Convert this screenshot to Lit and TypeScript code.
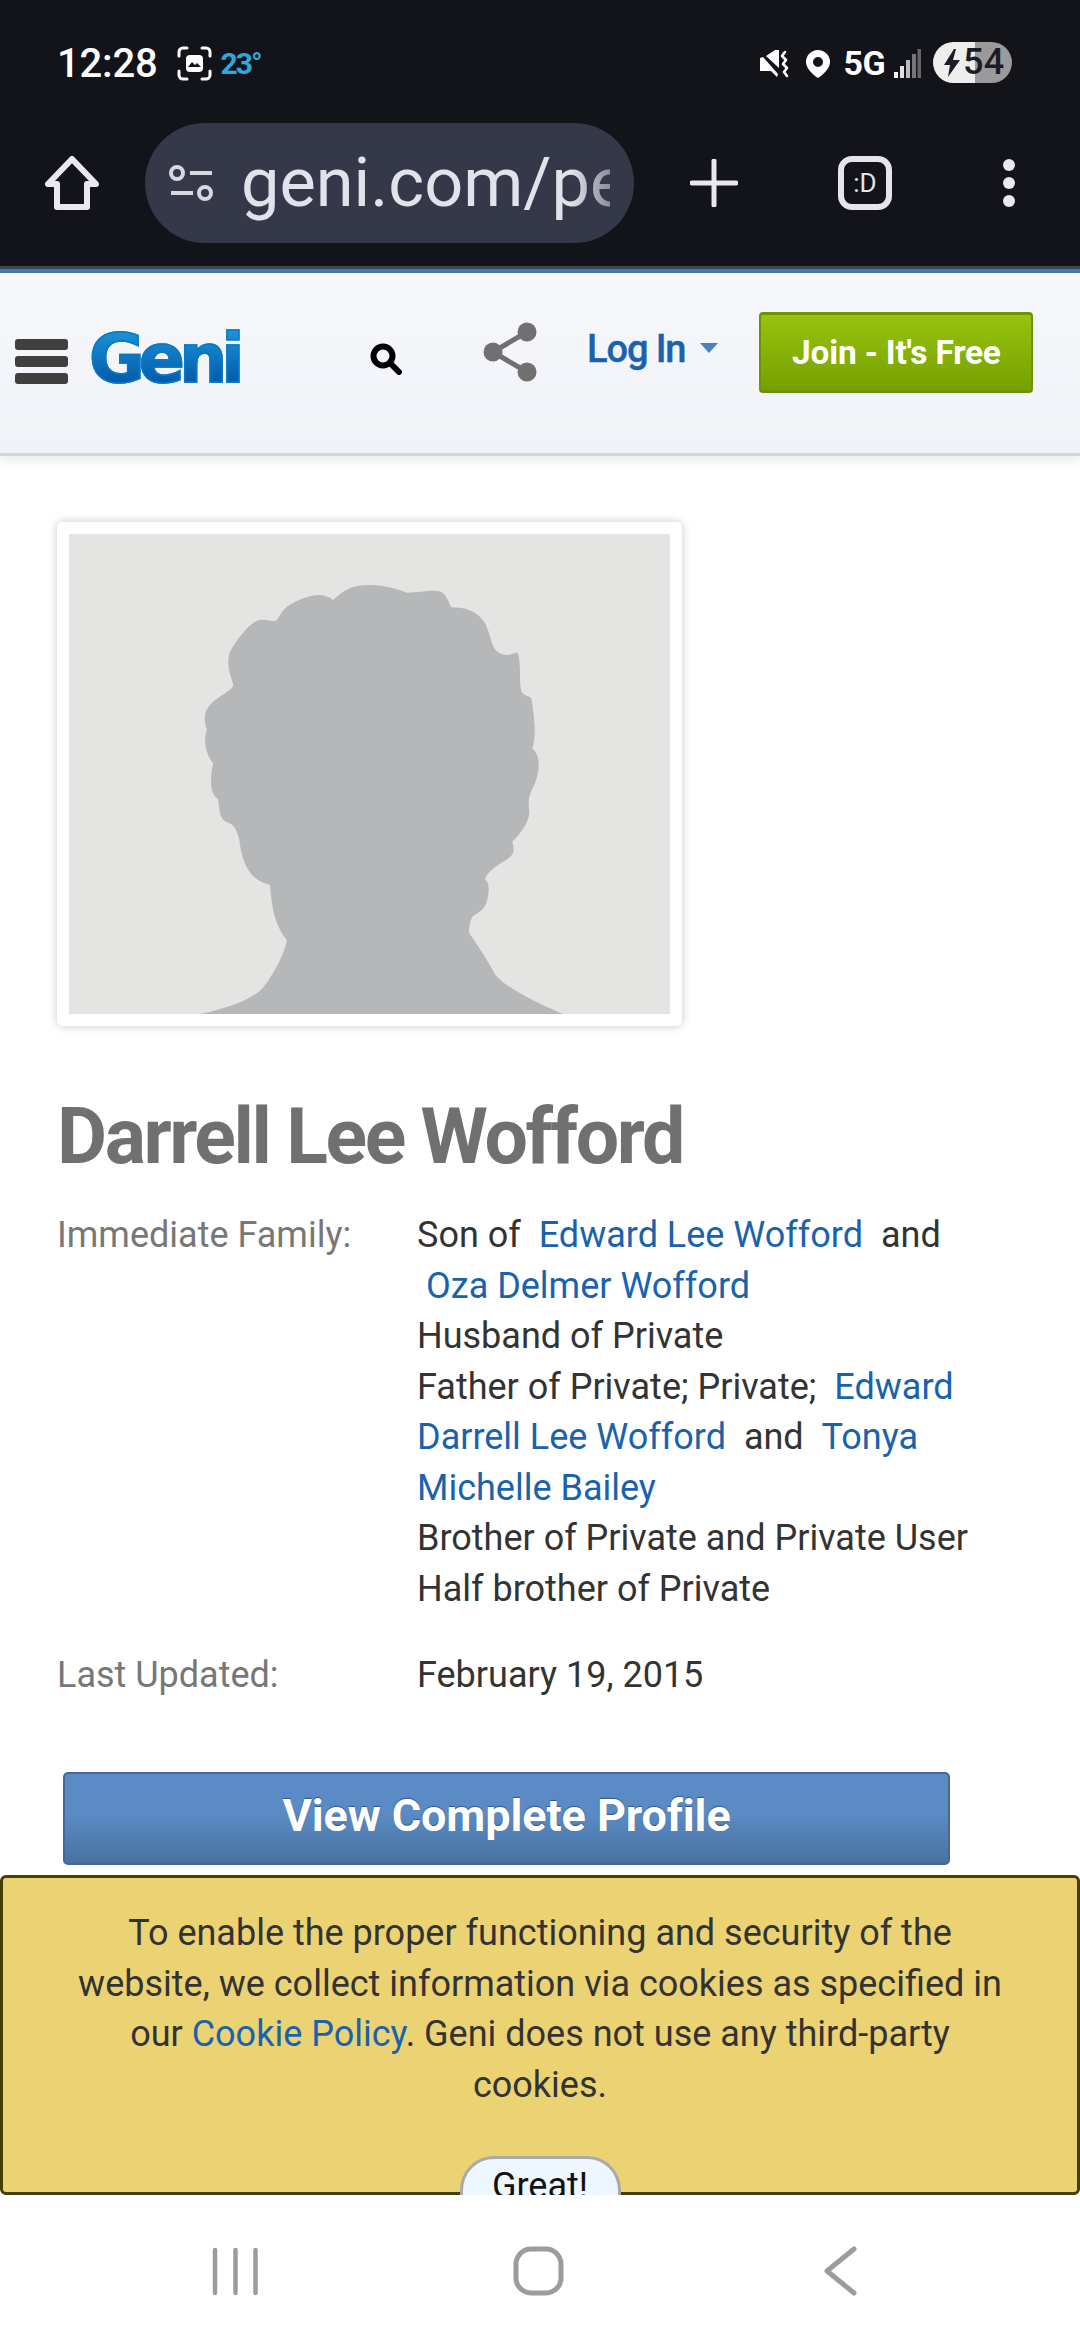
import { LitElement, html, css, svg } from "lit";
import { customElement } from "lit/decorators.js";

const silhouette = "M380 1512 C440 1495 505 1470 530 1430 C555 1390 580 1330 585 1290 C560 1250 550 1210 545 1125 C500 1110 480 1070 472 990 C465 950 455 940 440 935 C425 925 425 900 422 868 C405 855 400 820 410 760 C395 735 385 700 395 660 C385 620 390 595 415 570 C435 550 455 540 458 525 C450 490 440 460 450 425 C470 380 500 335 520 330 C540 325 555 340 562 330 C575 300 580 290 610 272 C640 255 670 245 695 270 C720 240 740 225 780 225 C820 225 850 240 870 248 C900 248 930 238 950 245 C965 255 968 275 975 292 C1020 290 1050 315 1062 360 C1072 395 1072 430 1105 435 C1120 435 1130 425 1133 430 C1142 470 1135 520 1142 545 C1148 560 1160 555 1165 565 C1172 620 1178 680 1167 715 C1185 735 1187 770 1175 815 C1165 845 1155 860 1160 900 C1162 935 1140 970 1120 995 C1125 1020 1125 1035 1105 1050 C1085 1065 1060 1085 1055 1108 C1068 1120 1065 1150 1058 1180 C1050 1205 1035 1210 1025 1220 C1018 1240 1015 1260 1018 1270 C1040 1310 1060 1350 1080 1395 C1110 1440 1190 1485 1240 1512 Z";

@customElement("app-root")
export class AppRoot extends LitElement {
  static styles = css`
    :host { display: block; width: 1080px; height: 2340px; overflow: hidden; background: #fff; font-family: Roboto, "Liberation Sans", sans-serif; }
    * { box-sizing: border-box; }
    a { color: #1a62ad; text-decoration: none; }
    svg { display: block; flex: none; }
    .page { display: flex; flex-direction: column; height: 2340px; }

    .chrome { height: 273px; flex: none; background: #12141a; border-bottom: 4px solid #4a76a8; box-shadow: inset 0 -3px 0 #3c475a; display: flex; flex-direction: column; }
    .status { height: 123px; padding: 42px 68px 0 57px; display: flex; align-items: flex-start; }
    .time { margin-top: 1px; font-size: 40px; font-weight: 500; color: #fff; line-height: 42px; letter-spacing: -0.2px; }
    .shot { margin: 4px 0 0 19px; }
    .temp { font-size: 30px; font-weight: 700; color: #2fa8dc; margin: 7px 0 0 9px; line-height: 30px; letter-spacing: -2px; }
    .spacer { flex: 1; }
    .mute { margin-top: 8px; }
    .pin { margin: 8px 0 0 17px; }
    .fiveg { margin: 3px 0 0 14px; font-size: 34px; font-weight: 700; color: #fff; line-height: 36px; letter-spacing: -0.6px; }
    .bars { margin: 7px 0 0 9px; }
    .battery { margin: 0 0 0 12px; width: 79px; height: 41px; border-radius: 21px; background: linear-gradient(90deg, #eeeeee 42px, #9a9a9a 42px); display: flex; align-items: center; padding-left: 10px; color: #1b1d26; font-size: 36px; font-weight: 500; line-height: 41px; }
    .battery span { margin-left: 2px; letter-spacing: 0.2px; }

    .tools { display: flex; align-items: center; height: 120px; padding-left: 45px; }
    .url { width: 489px; height: 120px; margin-left: 46px; border-radius: 60px; background: #343848; display: flex; align-items: center; padding-left: 24px; flex: none; }
    .urltext { margin-left: 27px; width: 369px; overflow: hidden; white-space: nowrap; font-size: 68.500px; line-height: 120px; color: #e2e2ea; -webkit-mask-image: linear-gradient(90deg, #000 330px, rgba(0,0,0,.5) 369px); mask-image: linear-gradient(90deg, #000 330px, rgba(0,0,0,.5) 369px); }
    .plus { margin-left: 56px; }
    .tab { margin-left: 100px; width: 54px; height: 54px; border: 6px solid #e4e4ea; border-radius: 14px; color: #e4e4ea; font-size: 26px; display: flex; align-items: center; justify-content: center; line-height: 1; flex: none; }
    .dots { margin-left: 110px; }

    .head { height: 183px; flex: none; border-bottom: 3px solid #cdd5e0; background: linear-gradient(#f6f8fc, #f0f2f7); box-shadow: 0 6px 10px rgba(0,0,0,.07); display: flex; align-items: flex-start; padding-left: 15px; position: relative; }
    .burger { margin-top: 66px; width: 53px; display: flex; flex-direction: column; gap: 6px; flex: none; }
    .burger i { display: block; height: 11px; border-radius: 3px; background: #3f3f3f; }
    .logo { margin: 48px 0 0 21px; width: 152px; flex: none; font-family: "DejaVu Sans", sans-serif; font-weight: 700; font-size: 68px; line-height: 76px; letter-spacing: -6px; background: linear-gradient(#1b93d8 12%, #0055a6 88%); -webkit-background-clip: text; background-clip: text; color: transparent; -webkit-text-stroke: 1.5px #0a78c2; }
    .search { margin: 70px 0 0 129px; }
    .share { margin: 49px 0 0 81px; }
    .login { margin: 51px 0 0 50px; font-size: 38px; font-weight: 500; line-height: 50px; color: #1a62ad; -webkit-text-stroke: 0.4px #1a62ad; letter-spacing: -1.1px; }
    .caret { margin: 70px 0 0 15px; width: 0; height: 0; border-left: 9px solid transparent; border-right: 9px solid transparent; border-top: 10px solid #4a80c4; }
    .join { margin: 39px 0 0 41px; width: 274px; height: 81px; border-radius: 4px; border: 1px solid #6f9200; border-width: 3px 2px; background: linear-gradient(#97c30f, #76a000); color: #fff; font-size: 33.500px; font-weight: 700; display: flex; align-items: center; justify-content: center; letter-spacing: -0.2px; }

    .main { flex: 1; padding: 66px 0 0 57px; overflow: hidden; }
    .photo { width: 625px; height: 504px; border: 12px solid #fff; border-radius: 5px; background: #e4e4e2; box-shadow: 0 0 10px rgba(0,0,0,.22); }
    .photo svg { width: 601px; height: 480px; }
    h1 { margin: 71px 0 0; font-size: 77px; line-height: 80px; font-weight: 700; color: #707070; letter-spacing: -2.4px; white-space: nowrap; }
    .facts { margin-top: 33px; display: grid; grid-template-columns: 360px 590px; row-gap: 36px; font-size: 36px; line-height: 50.500px; color: #333; }
    .facts .k { color: #777; }
    .gap { margin-left: 9px; }
    .cta { margin: 71px 0 0 6px; width: 887px; height: 93px; padding-bottom: 5px; border: 2px solid #44689a; border-radius: 5px; background: linear-gradient(#5a8bc4 45%, #48719f); color: #fff; font-size: 45px; font-weight: 700; display: flex; align-items: center; justify-content: center; text-shadow: 0 -1px 1px rgba(30,50,90,.6); letter-spacing: -0.1px; }

    .cookie { flex: none; height: 320px; border: 3px solid #463f00; border-radius: 6px; background: #ebd273; text-align: center; font-size: 36px; line-height: 50.500px; color: #333; padding: 30px 60px 0; display: flex; flex-direction: column; align-items: center; }
    .cookie p { margin: 0; }
    .great { margin-top: 46px; width: 161px; flex: 1; margin-bottom: -3px; border: 3px solid #a9a9a9; border-bottom: 0; border-radius: 34px 34px 0 0; background: #eef6ff; color: #111; overflow: hidden; line-height: 46px; padding-top: 4px; }

    .nav { height: 145px; flex: none; background: #fff; display: flex; }
    .nav svg { width: 1080px; height: 145px; }
  `;

  render() {
    return html`<div class="page">
      <div class="chrome">
        <div class="status">
          <span class="time">12:28</span>
          <svg class="shot" width="35" height="35" viewBox="0 0 35 35" fill="none">
            <path d="M2 10V6a4 4 0 0 1 4-4h4M25 2h4a4 4 0 0 1 4 4v4M33 25v4a4 4 0 0 1-4 4h-4M10 33H6a4 4 0 0 1-4-4v-4" stroke="#fff" stroke-width="3" stroke-linecap="round"/>
            <rect x="9" y="9" width="17" height="17" rx="4" fill="#fff"/>
            <path d="M11 21l4-5 3 3 2-2 4 4z" fill="#12141a"/>
          </svg>
          <span class="temp">23°</span>
          <span class="spacer"></span>
          <svg class="mute" width="29" height="28" viewBox="0 0 29 28">
            <path d="M0 8l3-1 15 17-1 3-6-6H0z M6 6l9-6h4v18z" fill="#fff"/>
            <path d="M25 2l-3 4 4 4-3 4 4 4-3 4 3 4" fill="none" stroke="#fff" stroke-width="2.600" stroke-linecap="round" stroke-linejoin="round"/>
          </svg>
          <svg class="pin" width="24" height="28" viewBox="0 0 24 28"><path fill-rule="evenodd" d="M12 0a12 12 0 0 1 12 12c0 6-6 12-12 16C6 24 0 18 0 12A12 12 0 0 1 12 0zm0 7a5 5 0 1 0 0 10a5 5 0 0 0 0-10z" fill="#fff"/></svg>
          <span class="fiveg">5G</span>
          <svg class="bars" width="27" height="29" viewBox="0 0 27 29">
            <rect x="0" y="23" width="4" height="6" fill="#fff"/>
            <rect x="6" y="17" width="4" height="12" fill="#e0e0e0"/>
            <rect x="12" y="11" width="4" height="18" fill="#bbb"/>
            <rect x="18" y="5" width="4" height="24" fill="#777"/>
            <rect x="23.500" y="0" width="3.500" height="29" fill="#666"/>
          </svg>
          <div class="battery">
            <svg width="18" height="28" viewBox="0 0 18 28"><path d="M11 0L1 16h6l-2 12 12-17h-7l3-11z" fill="#1b1d26"/></svg>
            <span>54</span>
          </div>
        </div>
        <div class="tools">
          <svg width="54" height="54" viewBox="0 0 54 54" fill="none"><path d="M27 3L3 28h9v23h30V28h9z" stroke="#e8e8ee" stroke-width="6" stroke-linejoin="round"/></svg>
          <div class="url">
            <svg width="45" height="37" viewBox="0 0 45 37" fill="none" stroke="#d8d8e0" stroke-width="4">
              <circle cx="8" cy="8" r="6"/><path d="M21 8h22M2 28h22"/><circle cx="36" cy="28" r="6"/>
            </svg>
            <div class="urltext">geni.com/person</div>
          </div>
          <svg class="plus" width="48" height="48" viewBox="0 0 48 48"><path d="M24 2v44M2 24h44" stroke="#e8e8ee" stroke-width="5" stroke-linecap="round"/></svg>
          <div class="tab">:D</div>
          <svg class="dots" width="14" height="48" viewBox="0 0 14 48" fill="#e8e8ee"><circle cx="7" cy="6" r="6"/><circle cx="7" cy="24" r="6"/><circle cx="7" cy="42" r="6"/></svg>
        </div>
      </div>

      <div class="head">
        <div class="burger"><i></i><i></i><i></i></div>
        <div class="logo">Geni</div>
        <svg class="search" width="32" height="32" viewBox="0 0 32 32" fill="none" stroke="#000"><circle cx="13" cy="13" r="9.500" stroke-width="6"/><path d="M20 20l9 9" stroke-width="6" stroke-linecap="round"/></svg>
        <svg class="share" width="54" height="60" viewBox="0 0 54 60" fill="#707070"><path d="M44 10L10 30l34 20" fill="none" stroke="#707070" stroke-width="5"/><circle cx="44" cy="10" r="9.500"/><circle cx="10" cy="30" r="9.500"/><circle cx="44" cy="50" r="9.500"/></svg>
        <div class="login">Log In</div>
        <div class="caret"></div>
        <div class="join">Join - It's Free</div>
      </div>

      <div class="main">
        <div class="photo">
          <svg viewBox="68 72 1426 1440" preserveAspectRatio="none">${svg`<path d=${silhouette} fill="#b6b7b9"/>`}</svg>
        </div>
        <h1>Darrell Lee Wofford</h1>
        <div class="facts">
          <div class="k">Immediate Family:</div>
          <div>Son of <a class="gap" href="#">Edward Lee Wofford</a> <span class="gap">and</span><br>
            <a class="gap" href="#">Oza Delmer Wofford</a><br>
            Husband of Private<br>
            Father of Private; Private; <a class="gap" href="#">Edward Darrell Lee Wofford</a> <span class="gap">and</span> <a class="gap" href="#">Tonya Michelle Bailey</a><br>
            Brother of Private and Private User<br>
            Half brother of Private</div>
          <div class="k">Last Updated:</div>
          <div>February 19, 2015</div>
        </div>
        <div class="cta">View Complete Profile</div>
      </div>

      <div class="cookie">
        <p>To enable the proper functioning and security of the website, we collect information via cookies as specified in our <a href="#">Cookie Policy</a>. Geni does not use any third-party<br>cookies.</p>
        <div class="great">Great!</div>
      </div>

      <div class="nav">
        <svg viewBox="0 0 1080 145" fill="none" stroke="#9c9c9c" stroke-linecap="round" stroke-linejoin="round">
          <path d="M215 55v43M235.500 55v43M255.500 55v43" stroke-width="4.500"/>
          <rect x="516" y="54" width="45" height="44" rx="15" stroke-width="5"/>
          <path d="M854 54L827 76l27 22" stroke-width="5"/>
        </svg>
      </div>
    </div>`;
  }
}
